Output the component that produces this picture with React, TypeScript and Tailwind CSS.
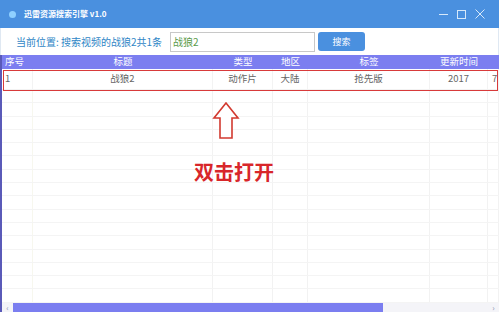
import React from "react";

const cols = [33, 180, 60, 35, 122, 58, 11];
const font = { fontFamily: '"Noto Sans CJK SC", "Noto Sans", sans-serif' };

export default function App() {
  const emptyRows = Array.from({ length: 16 });
  return (
    <div className="relative w-[499px] h-[312px] overflow-hidden bg-white flex flex-col" style={font}>
      {/* title bar */}
      <div className="h-[28px] bg-[#4a90df] flex items-center pl-[9px] pr-[14px] shrink-0">
        <div className="w-[7px] h-[7px] rounded-full bg-[#8fd0ff] mr-[8px]" />
        <span className="text-white text-[8px] font-semibold leading-none">迅雷资源搜索引擎 v1.0</span>
        <div className="ml-auto flex items-center gap-[9px] text-[#d6e8fa]">
          <svg width="9" height="9" viewBox="0 0 9 9"><path d="M0 4.5h9" stroke="currentColor" strokeWidth="1" /></svg>
          <svg width="9" height="9" viewBox="0 0 9 9"><rect x="0.5" y="0.5" width="8" height="8" fill="none" stroke="currentColor" strokeWidth="1" /></svg>
          <svg width="10" height="10" viewBox="0 0 10 10"><path d="M0.5 0.5l9 9M9.5 0.5l-9 9" stroke="currentColor" strokeWidth="1" /></svg>
        </div>
      </div>
      {/* toolbar */}
      <div className="h-[27px] flex items-center shrink-0 border-l border-r border-[#dfe8f2]">
        <span className="ml-[15px] text-[10px] text-[#2f86c6] w-[154px] leading-none whitespace-nowrap">当前位置: 搜索视频的战狼2共1条</span>
        <div className="w-[145px] h-[20px] border border-[#c8c8c8] flex items-center pl-[2px] text-[10px] text-[#5a9a4a] leading-none">战狼2</div>
        <div className="ml-[3px] w-[47px] h-[19px] rounded-[3px] bg-[#4a90df] flex items-center justify-center text-white text-[9px] leading-none">搜索</div>
      </div>
      {/* table */}
      <div className="flex-1 flex flex-col border-l-2 border-[#5a5ab8] relative">
        <div className="h-[14px] bg-[#7b7ef0] flex text-white text-[9.5px] leading-none items-center shrink-0">
          {["序号", "标题", "类型", "地区", "标签", "更新时间", ""].map((t, i) => (
            <div key={i} style={{ width: cols[i] - (i === 0 ? 2 : 0) }} className={`shrink-0 ${i === 0 ? "pl-[3px] text-left" : "text-center"}`}>{t}</div>
          ))}
        </div>
        <div className="h-[21px] flex items-center text-[9.5px] text-[#666] leading-none shrink-0 border-b border-[#f2f2f2]">
          {["1", "战狼2", "动作片", "大陆", "抢先版", "2017", "7"].map((t, i) => (
            <div key={i} style={{ width: cols[i] - (i === 0 ? 2 : 0) }} className={`shrink-0 h-full flex items-center border-r border-[#f3f3f3] ${i === 0 ? "pl-[3px]" : i === 6 ? "pl-[4px]" : "justify-center"}`}>{t}</div>
          ))}
        </div>
        <div className="flex-1 flex flex-col overflow-hidden">
          {emptyRows.map((_, r) => (
            <div key={r} className="h-[13.3px] shrink-0 flex border-b border-[#f4f4f4]">
              {cols.map((w, i) => (
                <div key={i} style={{ width: w - (i === 0 ? 2 : 0) }} className={`shrink-0 h-full border-r ${i === 0 ? "border-[#f7f7ee]" : "border-[#f2f2f2]"}`} />
              ))}
            </div>
          ))}
        </div>
        {/* red selection box */}
        <div className="absolute left-[1px] top-[15px] w-[495px] h-[21px] border-[1.5px] border-[#d83a3a] pointer-events-none" />
        {/* scrollbar */}
        <div className="h-[10px] shrink-0 flex items-center bg-[#f4f4f8]">
          <div className="w-[11px] text-[8px] text-[#8890b0] leading-none text-center">‹</div>
          <div className="w-[370px] h-[10px] bg-[#7b7ef0]" />
          <div className="flex-1" />
          <div className="w-[11px] text-[8px] text-[#8890b0] leading-none text-center">›</div>
        </div>
      </div>
      {/* overlay arrow */}
      <svg className="absolute left-[212px] top-[102px]" width="28" height="38" viewBox="0 0 28 38">
        <path d="M14 1 L26 16 L20 16 L20 36 L8 36 L8 16 L2 16 Z" fill="white" stroke="#d23a30" strokeWidth="1.6" strokeLinejoin="miter" />
      </svg>
      <div className="absolute left-[194px] top-[162px] text-[20px] font-bold text-[#d8262a] leading-none">双击打开</div>
    </div>
  );
}
